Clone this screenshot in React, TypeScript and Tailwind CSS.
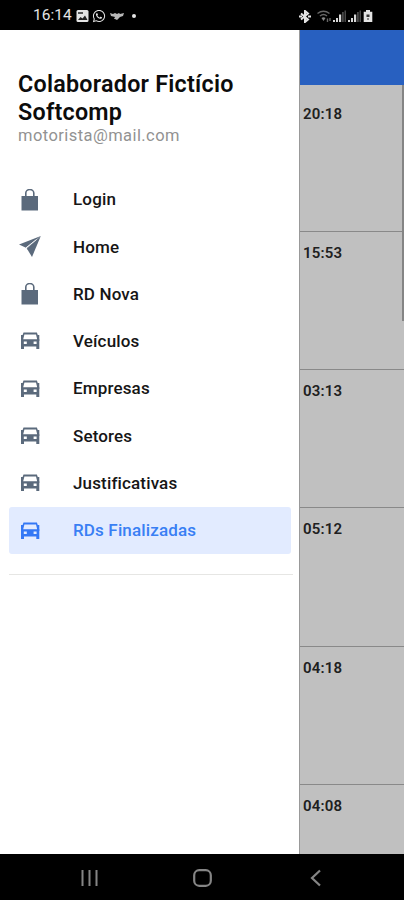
import type { ComponentType } from "react";
import { FaWhatsapp } from "react-icons/fa";

type IconProps = { className?: string };

function LockIcon({ className }: IconProps) {
  return (
    <svg className={className} viewBox="0 0 22 22">
      <path d="M2.5 7h16.5v14.5H2.5z" fill="currentColor" />
      <path d="M6.8 8V4a4 3.5 0 0 1 8 0V8" fill="none" stroke="currentColor" strokeWidth="1.6" />
    </svg>
  );
}

function PlaneIcon({ className }: IconProps) {
  return (
    <svg className={className} viewBox="0 0 22 22" fill="currentColor">
      <path d="M21.8 0L0 8.5l7 3.2z" />
      <path d="M21.8 0L8 12.7l5 8.3z" />
      <path d="M20 1.5L7.5 12l1.5 2z" opacity="0.7" />
      <path d="M17.5 3.5L7 11.800" stroke="#fff" strokeWidth="0.9" />
    </svg>
  );
}

function CarIcon({ className }: IconProps) {
  return (
    <svg className={className} viewBox="0 0 22 22" fill="currentColor" fillRule="evenodd">
      <path d="M4.500 2.600h13.400l2.400 7v9.400h-3v-2.400H5V19H2V9.600zM5.400 4.600L4.200 9.300h14L17 4.600zM4.800 11.400v2.600h3v-2.600zM14.600 11.400v2.600h3v-2.600z" />
      <path d="M2 5h2v6H2zM18.300 5h2v6h-2z" />
    </svg>
  );
}

type MenuItem = {
  title: string;
  icon: ComponentType<IconProps>;
};

const menu: MenuItem[] = [
  { title: "Login", icon: LockIcon },
  { title: "Home", icon: PlaneIcon },
  { title: "RD Nova", icon: LockIcon },
  { title: "Veículos", icon: CarIcon },
  { title: "Empresas", icon: CarIcon },
  { title: "Setores", icon: CarIcon },
  { title: "Justificativas", icon: CarIcon },
  { title: "RDs Finalizadas", icon: CarIcon },
];

const times = ["20:18", "15:53", "03:13", "05:12", "04:18", "04:08"];

function Signal() {
  return (
    <svg width="14" height="12" viewBox="0 0 14 12">
      <path d="M0 12V10h2v2zM3 12V8h2v4zM6 12V4.5h2.2V12z" fill="#d8d8d8" />
      <path d="M9 12V2h1.8v10zM11.5 12V.5H13V12z" fill="#484848" />
    </svg>
  );
}

function StatusBar() {
  return (
    <div className="flex h-[30px] shrink-0 items-center bg-black pt-[2px] pr-[31px] pl-[33px] text-[#e4e4e4]">
      <span className="w-[43px] text-[15.5px] leading-none">16:14</span>
      <svg width="13" height="12" viewBox="0 0 13 12">
        <rect x="0.5" width="12" height="12" rx="1.5" fill="#e4e4e4" />
        <path d="M2 10l2.5-3 2 1.500L9 5.5l2.5 4.500z" fill="#222" />
        <path d="M2 2h5v2H2z" fill="#555" />
      </svg>
      <FaWhatsapp className="ml-[3px] h-[14px] w-[14px]" />
      <svg className="ml-[4px]" width="14" height="10" viewBox="0 0 14 10">
        <path d="M0 2l3 1 2-1 2 1 2-1 1 1 4-1-1 3-3 1-3 3-2-1H4l1-2-4-1z" fill="#b8b8b8" />
      </svg>
      <span className="ml-[8px] h-1 w-1 rounded-full bg-[#e4e4e4]" />
      <div className="ml-auto flex items-center">
        <svg width="12" height="13" viewBox="0 0 12 13" fill="none" stroke="#e4e4e4" strokeWidth="2">
          <path d="M2 3.5l7 6L6 12V1l3 2.5-7 6" />
          <path d="M0 6.500h3M9 6.500h3" />
        </svg>
        <svg className="ml-[6px]" width="16" height="13" viewBox="0 0 16 13" fill="none">
          <path d="M.5 3.500q6-4.500 12 0M3 6q3.500-3 7 0" stroke="#666" strokeWidth="1.5" />
          <path d="M4.500 8q2-1.600 4 0l-2 3z" fill="#888" />
          <path d="M10.500 12V8.500M13 11V8" stroke="#666" strokeWidth="1.4" />
        </svg>
        <div className="flex gap-px">
          <Signal />
          <Signal />
        </div>
        <svg className="ml-px" width="10" height="12" viewBox="0 0 10 12">
          <path d="M3 0h4v1.800h2.300V12H.7V1.800H3z" fill="#e4e4e4" />
          <path d="M3.500 4.500h3V7h-3zM4.500 8h1v2h-1z" fill="#333" />
        </svg>
      </div>
    </div>
  );
}

function Drawer() {
  return (
    <aside className="w-[299px] shrink-0 bg-white pt-[40px]">
      <div className="pl-[18px]">
        <h1 className="w-[240px] text-[23.3px] leading-[28px] font-semibold tracking-[0.25px] text-[#0c0c0c]">
          Colaborador Fictício Softcomp
        </h1>
        <p className="text-[16.5px] leading-[20px] tracking-[0.43px] text-[#929292]">
          motorista@mail.com
        </p>
      </div>
      <nav className="mt-[30px] flex flex-col gap-[0.3px] pr-[8px] pl-[9px]">
        {menu.map(({ title, icon: Icon }) => {
          const active = title === "RDs Finalizadas";
          return (
            <div
              key={title}
              className={`flex h-[47px] items-center rounded-[3px] pl-[10px] ${
                active ? "bg-[#e2ebff] text-[#397ff4]" : "text-[#161616]"
              }`}
            >
              <Icon className={`h-[22px] w-[22px] ${active ? "text-[#3478f5]" : "text-[#5b6a7c]"}`} />
              <span className="ml-[32px] pt-px text-[17px] font-medium tracking-[0.15px]">{title}</span>
            </div>
          );
        })}
      </nav>
      <div className="mt-[20px] mr-[6px] ml-[9px] h-px bg-[#e6e6e4]" />
    </aside>
  );
}

function Records() {
  return (
    <main className="flex min-w-0 flex-1 flex-col overflow-hidden bg-[#c0c0c0]">
      <div className="h-[55px] shrink-0 bg-[#2860c0]" />
      <div className="flex min-h-0 flex-1 overflow-hidden">
        <div className="flex-1">
          {times.map((time, i) => (
            <div
              key={time}
              className={`border-b border-[#898989] pl-[3px] ${
                i === 0 ? "h-[146.5px] pt-[19px]" : "h-[138.4px] pt-[11px]"
              }`}
            >
              <span className="block text-[15px] leading-[20px] font-semibold tracking-[0.2px] text-[#202020]">{time}</span>
            </div>
          ))}
        </div>
        <div className="-ml-[2px] h-[236px] w-[2px] bg-[#858585]" />
      </div>
    </main>
  );
}

function NavBar() {
  return (
    <div className="flex h-[46px] shrink-0 items-center bg-black pt-[2px] pl-[81px] text-[#858585]">
      <svg width="17" height="18" viewBox="0 0 17 18" stroke="currentColor" strokeWidth="2">
        <path d="M1.5 1v16M8.5 1v16M15.5 1v16" />
      </svg>
      <svg className="ml-[95px]" width="19" height="18" viewBox="0 0 19 18" fill="none" stroke="currentColor" strokeWidth="2.2">
        <rect x="1.2" y="1.2" width="16.6" height="15.6" rx="5" />
      </svg>
      <svg className="ml-[98px]" width="11" height="18" viewBox="0 0 11 18" fill="none" stroke="currentColor" strokeWidth="2.2">
        <path d="M10 1.5L2 9l8 7.5" />
      </svg>
    </div>
  );
}

export default function App() {
  return (
    <div className="flex h-[900px] w-[404px] flex-col overflow-hidden font-['Roboto',sans-serif]">
      <StatusBar />
      <div className="flex min-h-0 flex-1">
        <Drawer />
        <div className="flex w-[105px] border-l border-[#999]">
          <Records />
        </div>
      </div>
      <NavBar />
    </div>
  );
}
